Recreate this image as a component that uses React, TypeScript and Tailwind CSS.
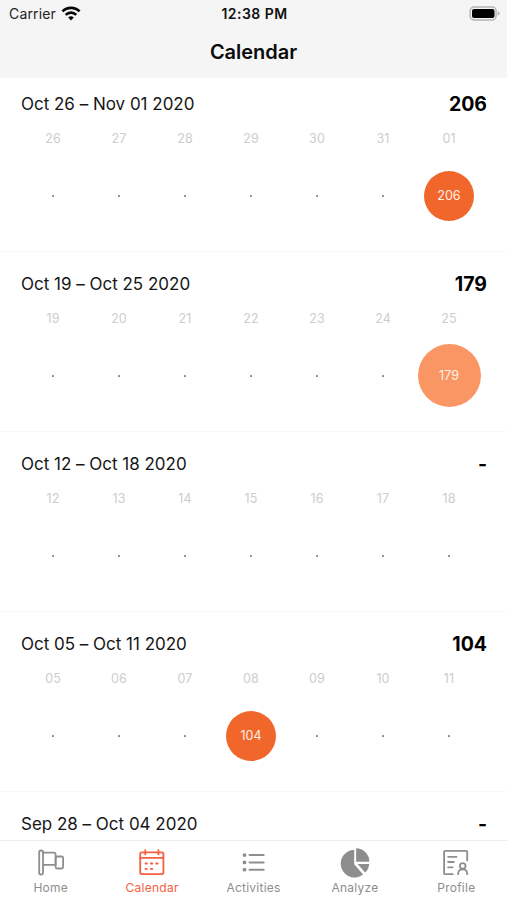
import type { ReactNode } from "react";

type Week = {
  range: string;
  total: string;
  days: string[];
  active?: { index: number; value: string; className: string };
};

const weeks: Week[] = [
  {
    range: "Oct 26 – Nov 01 2020",
    total: "206",
    days: ["26", "27", "28", "29", "30", "31", "01"],
    active: { index: 6, value: "206", className: "size-[50px] bg-[#f1662a]" },
  },
  {
    range: "Oct 19 – Oct 25 2020",
    total: "179",
    days: ["19", "20", "21", "22", "23", "24", "25"],
    active: { index: 6, value: "179", className: "size-[63px] bg-[#fa9664]" },
  },
  {
    range: "Oct 12 – Oct 18 2020",
    total: "-",
    days: ["12", "13", "14", "15", "16", "17", "18"],
  },
  {
    range: "Oct 05 – Oct 11 2020",
    total: "104",
    days: ["05", "06", "07", "08", "09", "10", "11"],
    active: { index: 3, value: "104", className: "size-[50px] bg-[#f1662a]" },
  },
  {
    range: "Sep 28 – Oct 04 2020",
    total: "-",
    days: [],
  },
];

function WeekRow({ week }: { week: Week }) {
  return (
    <section className="h-[180px] shrink-0 border-b border-[#f8f8f8]">
      <div className="flex h-[64px] items-center justify-between pl-[21px] pr-5 pt-[2px]">
        <h2 className="text-[17px] tracking-[-0.01px] text-[#161616]">{week.range}</h2>
        <span className="text-[19.5px] font-bold text-black">{week.total}</span>
      </div>
      <div className="ml-5 grid w-[462px] grid-cols-7">
        {week.days.map((day, i) => (
          <div key={day} className="flex flex-col items-center">
            <span className="h-[15px] text-[12.5px] leading-[6px] tracking-[0.1px] text-[#cdcdcd]">{day}</span>
            <div className="flex h-[89px] items-center justify-center">
              {week.active?.index === i ? (
                <span
                  className={`flex items-center justify-center rounded-full pt-[2px] text-[12.5px] text-[#fff0e8] ${week.active.className}`}
                >
                  {week.active.value}
                </span>
              ) : (
                <span className="mt-px size-[2px] rounded-[0.5px] bg-[#8c8c8c]" />
              )}
            </div>
          </div>
        ))}
      </div>
    </section>
  );
}

function TabItem({ label, active, children }: { label: string; active?: boolean; children: ReactNode }) {
  return (
    <button className={`flex flex-1 flex-col items-center ${active ? "text-[#f4603f]" : "text-[#8e8e8e]"}`}>
      <svg
        viewBox="0.7 0 32 32"
        className="mt-[6px] size-8"
        fill="none"
        stroke="currentColor"
        strokeWidth="1.8"
        strokeLinecap="round"
        strokeLinejoin="round"
      >
        {children}
      </svg>
      <span className="mt-[1px] text-[12px] leading-4 tracking-[0.25px]">{label}</span>
    </button>
  );
}

export default function App() {
  return (
    <div className="flex h-[900px] w-[507px] flex-col overflow-hidden bg-white font-['Inter','Liberation_Sans',sans-serif]">
      <header className="h-[78px] shrink-0 bg-[#f5f5f5]">
        <div className="grid h-[27px] grid-cols-3 items-center pl-[9px] pr-[7px]">
          <div className="flex items-center gap-[5px]">
            <span className="text-[14px] tracking-[0.15px] text-[#222]">Carrier</span>
            <svg viewBox="0 0 20 15" className="h-[15px] w-5" fill="none" stroke="#050505" strokeWidth="2.6">
              <path d="M1.4 5.4a12.2 12.2 0 0 1 17.2 0" />
              <path d="M4.7 8.8a7.5 7.5 0 0 1 10.6 0" />
              <path d="M10 14.4l-2.8-2.8a4 4 0 0 1 5.6 0z" fill="#050505" stroke="none" />
            </svg>
          </div>
          <span className="text-center text-[14px] font-semibold tracking-[0.45px] text-[#111]">12:38 PM</span>
          <svg viewBox="0 0 31 15" className="h-[15px] w-[31px] justify-self-end">
            <rect x="1.1" y="1" width="26" height="13" rx="4" fill="#f5f5f5" stroke="#b2b2b2" strokeWidth="1.4" />
            <rect x="3" y="3" width="22.5" height="9" rx="2" fill="#000" />
            <path d="M28.7 5.2q2 .8 2 2.3t-2 2.3z" fill="#b2b2b2" />
          </svg>
        </div>
        <h1 className="text-center text-[20px] font-semibold leading-[50px] tracking-[-0.03px] text-[#0a0a0a]">
          Calendar
        </h1>
      </header>

      <main className="flex min-h-0 flex-1 flex-col overflow-hidden">
        <div className="-mt-[6px] flex flex-col">
          {weeks.map((week) => (
            <WeekRow key={week.range} week={week} />
          ))}
        </div>
      </main>

      <nav className="flex h-[60px] shrink-0 border-t border-[#ececec] bg-white">
        <TabItem label="Home">
          <rect x="4.9" y="3.5" width="3.8" height="24" rx="1.5" />
          <path d="M8.7 5.7H19.6a1.7 1.7 0 0 1 1.7 1.7V17.8H8.7" />
          <rect x="21.3" y="9.5" width="7.5" height="12" rx="1.5" />
        </TabItem>
        <TabItem label="Calendar" active>
          <rect x="4.9" y="5.3" width="23.2" height="21.9" rx="1.6" />
          <path d="M4.9 10.9h23.2M10 3.2v4.2M23.1 3.2v4.2M10.1 16.5h1.5M15.5 16.5h1.5M20.9 16.5h1.5M10.1 21.9h1.5M15.5 21.9h1.5" />
        </TabItem>
        <TabItem label="Activities">
          <path d="M12.3 8.1h14.1M12.3 15.4h14.1M12.3 22.7h14.1" strokeWidth="2" />
          <g fill="currentColor" stroke="none">
            <circle cx="7.2" cy="8.1" r="1.9" />
            <circle cx="7.2" cy="15.4" r="1.9" />
            <circle cx="7.2" cy="22.7" r="1.9" />
          </g>
        </TabItem>
        <TabItem label="Analyze">
          <g fill="currentColor" stroke="none">
            <path d="M15.9 2.7v14.5l8.9 10.4A13.9 13.9 0 1 1 15.9 2.7z" />
            <path d="M17.8 1.2A13.4 13.4 0 0 1 31 14.8H17.8z" />
            <path d="M19.3 17H30.9a13 13 0 0 1-4.1 8.6z" />
          </g>
        </TabItem>
        <TabItem label="Profile">
          <path d="M13.5 27.2H5.8a1 1 0 0 1-1-1V4.8a1 1 0 0 1 1-1H26.9a1 1 0 0 1 1 1v8.6M8.8 9.8h8.4M8.8 15h5.8M8.8 20.3h4.6" />
          <circle cx="23.4" cy="18.9" r="2.8" />
          <path d="M18.9 27.2v-.5q0-4.3 4.5-4.3t4.5 4.3v.5" />
        </TabItem>
      </nav>
    </div>
  );
}
